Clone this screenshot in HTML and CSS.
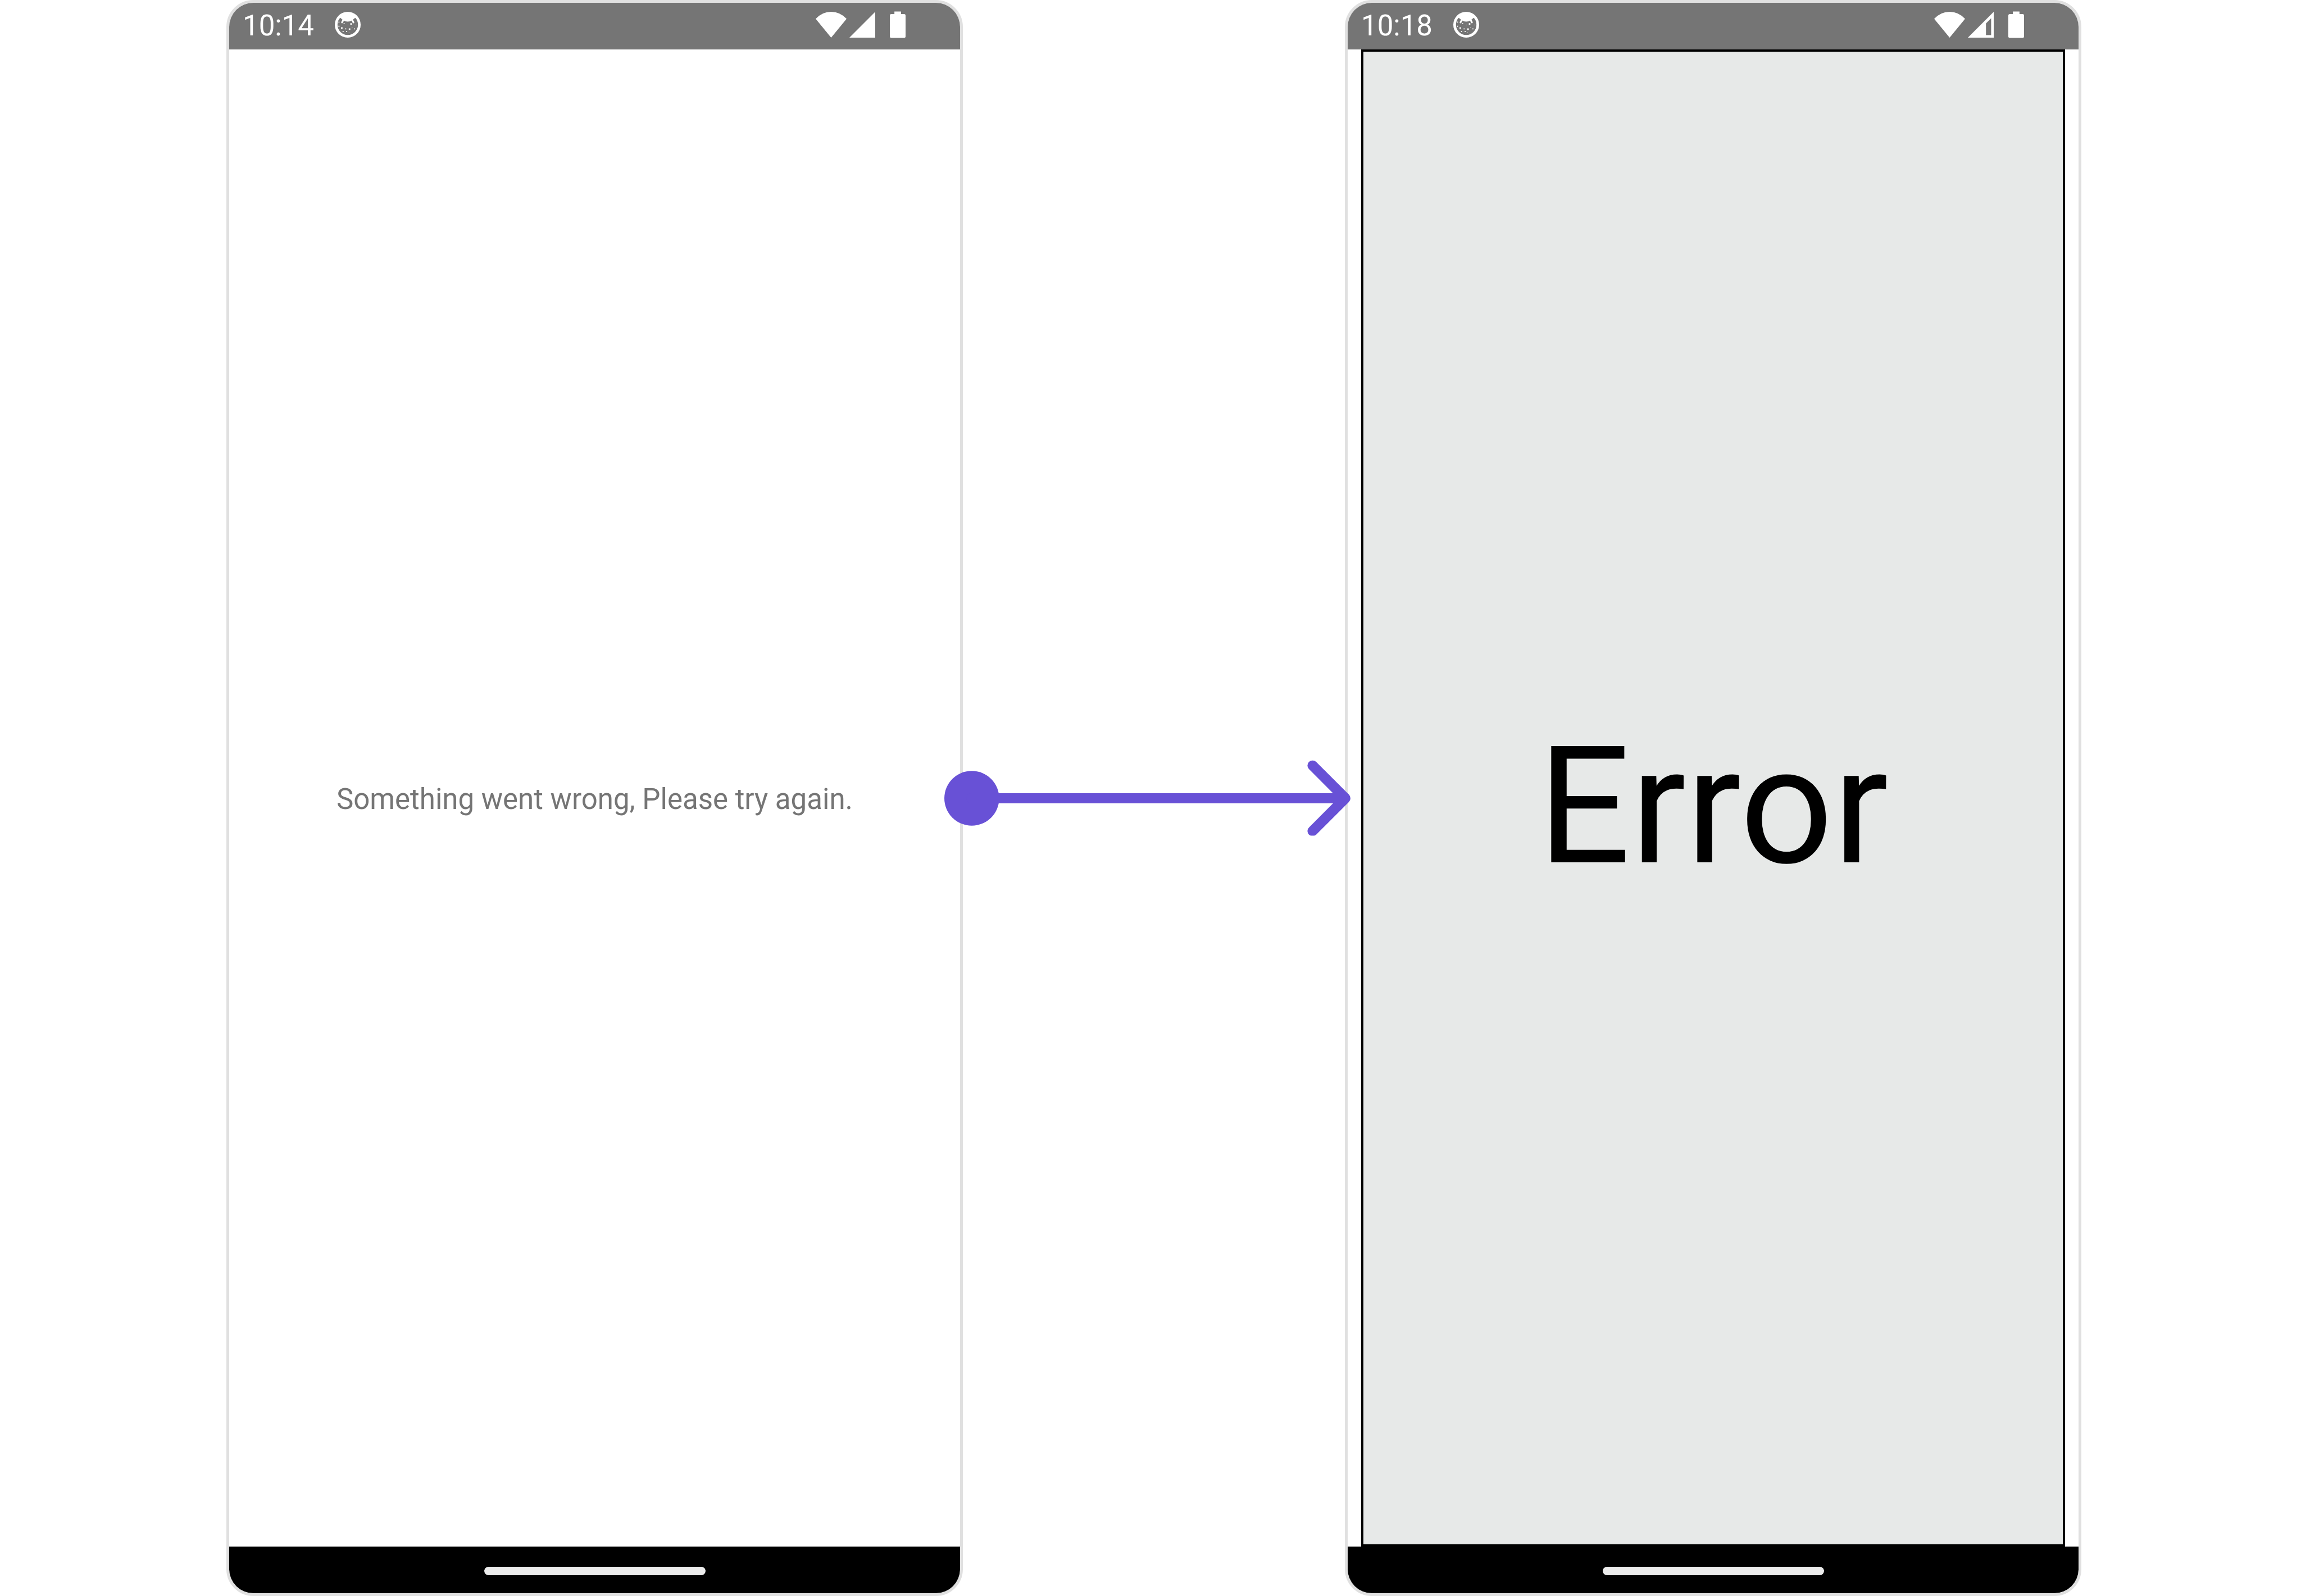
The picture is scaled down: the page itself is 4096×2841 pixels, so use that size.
FILE: index.html
```html
<!DOCTYPE html>
<html lang="en">
<head>
<meta charset="utf-8">
<title>Error screen</title>
<link rel="stylesheet" href="styles.css">
</head>
<body>
<svg class="symbols" aria-hidden="true">
  <symbol id="face" viewBox="0 0 50 50">
    <circle cx="25" cy="25" r="22.4" fill="none" stroke="#fff" stroke-width="5.2"/>
    <path d="M6 10Q12 1 25 1T44 10L39 12Q37 14 34 16Q30 19 25 19T16 16Q13 14 11 12Z" fill="#fff"/>
    <path d="M17 15L14 20.500M33 15L36 20.500" stroke="#fff" stroke-width="3.4" stroke-linecap="round"/>
    <path d="M7 19h2v2H7zM17 22h2v2h-2zM25 25h1v1h-1zM30 22h3v3h-3zM40 25h2v1h-2zM7 27h2v2H7zM12 30h3v3h-3zM20 32h2v2h-2zM27 32h3v3h-3zM33 30h1v1h-1zM37 32h2v2h-2zM15 37h2v2h-2zM22 37h2v2h-2zM27 40h1v1h-1z" fill="#fff"/>
  </symbol>
  <symbol id="wifi" viewBox="0 0 60 50">
    <path d="M0 13.500Q13 0 30 0T60 13.500L30 50Z" fill="#fff"/>
  </symbol>
  <symbol id="signal" viewBox="0 0 50 50">
    <path d="M50 0V50H0Z" fill="#fff"/>
  </symbol>
  <symbol id="signal-low" viewBox="0 0 50 50">
    <path fill-rule="evenodd" d="M50 0V50H0ZM45 12.500L35 22.500V45H45Z" fill="#fff"/>
  </symbol>
  <symbol id="battery" viewBox="0 0 31 52">
    <path d="M9 0H22V5H28Q31 5 31 8V49Q31 52 28 52H3Q0 52 0 49V8Q0 5 3 5H9Z" fill="#fff"/>
  </symbol>
</svg>
<main class="flow">
  <section class="phone phone-before">
    <header class="status">
      <time class="clock">10:14</time>
      <svg class="icon"><use href="#face"/></svg>
      <div class="indicators">
        <svg class="icon-wifi"><use href="#wifi"/></svg>
        <svg class="icon"><use href="#signal"/></svg>
        <svg class="icon-battery"><use href="#battery"/></svg>
      </div>
    </header>
    <div class="screen">
      <p class="message">Something went wrong, Please try again.</p>
    </div>
    <footer class="nav"><span class="home"></span></footer>
  </section>
  <div class="connector">
    <svg class="arrow" viewBox="0 0 793 148">
      <circle cx="53.500" cy="74" r="53.500" fill="#6851d6"/>
      <path d="M53 74H783M719 10L783 74L719 138" fill="none" stroke="#6851d6" stroke-width="20" stroke-linecap="round" stroke-linejoin="round"/>
    </svg>
  </div>
  <section class="phone phone-after">
    <header class="status">
      <time class="clock">10:18</time>
      <svg class="icon"><use href="#face"/></svg>
      <div class="indicators">
        <svg class="icon-wifi"><use href="#wifi"/></svg>
        <svg class="icon"><use href="#signal-low"/></svg>
        <svg class="icon-battery"><use href="#battery"/></svg>
      </div>
    </header>
    <div class="screen screen-padded">
      <div class="panel"><h1 class="error">Error</h1></div>
    </div>
    <footer class="nav"><span class="home"></span></footer>
  </section>
</main>
</body>
</html>
```
FILE: styles.css
```css
* {
  box-sizing: border-box;
}

body {
  margin: 0;
  background: #fff;
  font-family: Roboto, "Liberation Sans", sans-serif;
}

.symbols {
  display: none;
}

.flow {
  display: grid;
  grid-template-columns: 403fr 1311fr 680fr 1311fr 391fr;
  min-height: 100vh;
}

.phone {
  display: flex;
  flex-direction: column;
  border: 5px solid #e0e0e0;
  border-radius: 48px;
  overflow: hidden;
}

.phone-before {
  grid-column: 2;
}

.phone-after {
  grid-column: 4;
}

.status {
  display: flex;
  align-items: center;
  height: 83px;
  padding: 0 97px 5px 24px;
  background: #757575;
  color: #fff;
}

.clock {
  width: 164px;
  padding-top: 4px;
  font-size: 51px;
  line-height: 60px;
}

.icon {
  width: 46px;
  height: 46px;
}

.indicators {
  display: flex;
  align-items: center;
  gap: 5px;
  margin-left: auto;
}

.icon-wifi {
  width: 55px;
  height: 46px;
}

.icon-battery {
  width: 28px;
  height: 48px;
  margin-left: 21px;
}

.screen {
  display: flex;
  flex: 1;
  align-items: center;
  justify-content: center;
}

.screen-padded {
  align-items: stretch;
  padding: 0 24px;
}

.message {
  margin: 0;
  padding-top: 4px;
  color: #757575;
  font-size: 51px;
  line-height: 60px;
}

.panel {
  display: flex;
  flex: 1;
  align-items: center;
  justify-content: center;
  padding-top: 30px;
  border: 4px solid #000;
  background: #e7e9e8;
}

.error {
  margin: 0;
  color: #000;
  font-size: 291px;
  font-weight: 400;
  line-height: 340px;
}

.nav {
  display: flex;
  align-items: center;
  justify-content: center;
  height: 83px;
  padding-top: 4px;
  background: #000;
}

.home {
  width: 394px;
  height: 15px;
  border-radius: 8px;
  background: #ebebeb;
}

.connector {
  position: relative;
  grid-column: 3;
}

.arrow {
  position: absolute;
  z-index: 1;
  top: 50%;
  left: -33px;
  width: calc(100% + 43px);
  transform: translateY(-50%);
}
```
